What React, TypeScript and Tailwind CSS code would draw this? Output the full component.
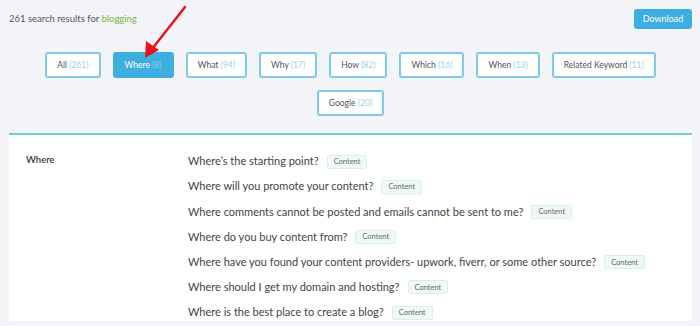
const TABS: { label: string; count: number }[] = [
  { label: "All", count: 261 },
  { label: "Where", count: 8 },
  { label: "What", count: 94 },
  { label: "Why", count: 17 },
  { label: "How", count: 82 },
  { label: "Which", count: 16 },
  { label: "When", count: 13 },
  { label: "Related Keyword", count: 11 },
  { label: "Google", count: 20 },
];

const QUESTIONS = [
  "Where’s the starting point?",
  "Where will you promote your content?",
  "Where comments cannot be posted and emails cannot be sent to me?",
  "Where do you buy content from?",
  "Where have you found your content providers- upwork, fiverr, or some other source?",
  "Where should I get my domain and hosting?",
  "Where is the best place to create a blog?",
];

export default function App() {
  const active = "Where";

  return (
    <div
      className="relative h-[326px] w-[700px] overflow-hidden bg-[#f3f4f7] pl-[9px] pr-[8px]"
      style={{ fontFamily: "Lato, 'Open Sans', sans-serif" }}
    >
      {/* Header */}
      <div className="flex items-center justify-between pt-[9px]">
        <p className="text-[9.5px] text-[#555]">
          261 search results for <span className="text-[#7cb342]">blogging</span>
        </p>
        <button className="h-[20px] w-[58px] rounded-[3px] bg-[#3daee0] text-[9px] text-white">
          Download
        </button>
      </div>

      {/* Tabs */}
      <div className="mx-auto mt-[23px] flex w-[630px] flex-wrap justify-center gap-[12px]">
        {TABS.map(t => {
          const on = t.label === active;
          return (
            <button
              key={t.label}
              className={
                on
                  ? "h-[26px] whitespace-nowrap rounded-[3px] border-2 border-[#3daee0] bg-[#3daee0] px-[10px] text-[8.5px] text-white"
                  : "h-[26px] whitespace-nowrap rounded-[3px] border-2 border-[#7fc9ea] bg-white px-[10px] text-[8.5px] text-[#555]"
              }
            >
              {t.label}{" "}
              <span className={on ? "text-[#86d0ee]" : "text-[#9ed3dc]"}>({t.count})</span>
            </button>
          );
        })}
      </div>

      {/* Results card */}
      <div className="mt-[17px] flex border-t-2 border-[#6fcfcb] bg-white pt-[18px]">
        <div className="w-[179px] shrink-0 pl-[17px] text-[9.5px] font-semibold text-[#333]">Where</div>
        <div className="flex flex-col gap-[8.2px]">
          {QUESTIONS.map(q => (
            <div key={q} className="flex h-[17px] items-center gap-[8px] whitespace-nowrap">
              <span className="text-[11px] text-[#444]">{q}</span>
              <span className="flex h-[14px] items-center rounded-[2px] border border-[#d6f1e8] bg-[#effaf6] px-[6px] text-[7.5px] text-[#666]">
                Content
              </span>
            </div>
          ))}
        </div>
      </div>

      {/* Red arrow annotation */}
      <svg className="absolute left-0 top-0" width="700" height="326" viewBox="0 0 700 326">
        <line x1="185" y1="7" x2="152" y2="49" stroke="#e8141b" strokeWidth="2.5" strokeLinecap="round" />
        <polygon points="145,58 146,41 159,50" fill="#e8141b" />
      </svg>
    </div>
  );
}
